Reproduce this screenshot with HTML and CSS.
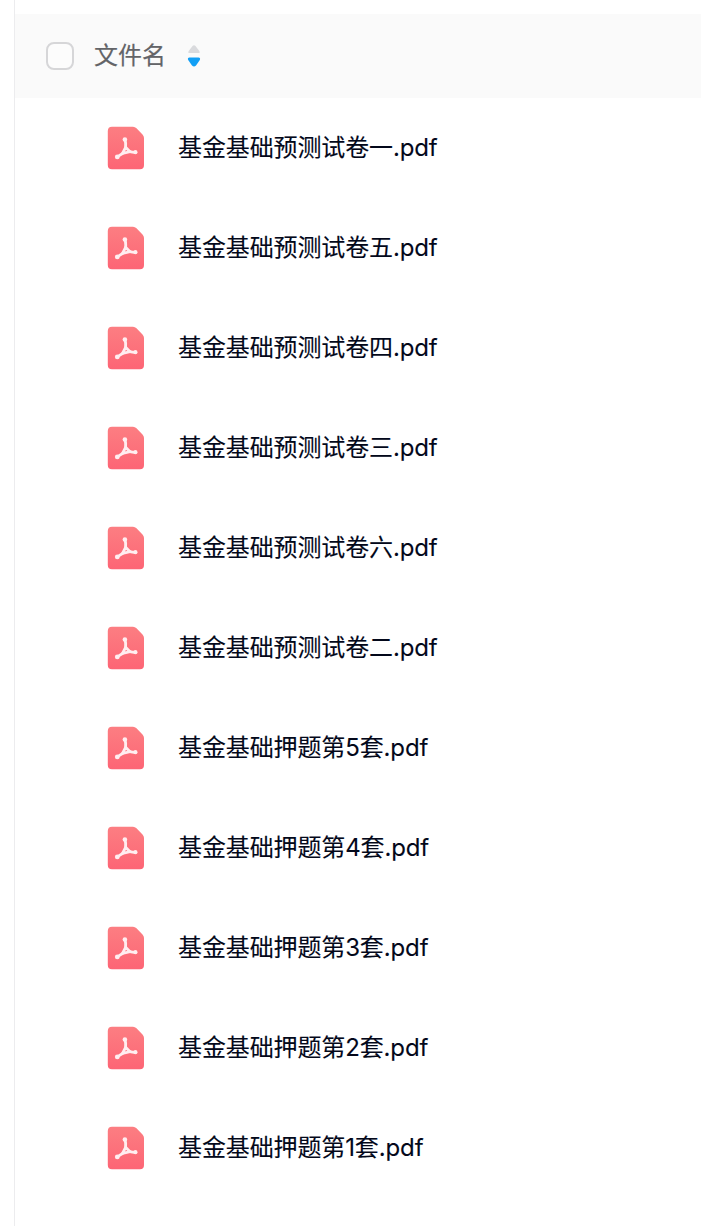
FILE: index.html
```html
<!DOCTYPE html>
<html lang="zh-CN">
<head>
<meta charset="utf-8">
<title>文件列表</title>
<link rel="stylesheet" href="styles.css">
</head>
<body>
<main class="panel">
  <header class="head">
    <span class="checkbox"></span>
    <span class="label">文件名</span>
    <svg class="sort" width="14" height="24" viewBox="0 0 14 24"><path d="M2.500 9Q.5 9 1.700 7L5.500 2Q7 .5 8.500 2L12.300 7Q13.500 9 11.500 9Z" fill="#d9dadd"/><path d="M2.500 13.500Q.2 13.500 1.200 16L5 21.500Q7 23.500 9 21.500L12.800 16Q13.800 13.500 11.500 13.500Z" fill="#129ff5"/></svg>
  </header>
  <ul class="files" id="files"></ul>
</main>
<template id="row">
  <li class="file">
    <svg class="icon" width="38" height="44" viewBox="0 0 38 44">
      <defs><linearGradient id="g" x1="0" y1="0" x2="0" y2="1"><stop offset="0" stop-color="#fc7e82"/><stop offset="1" stop-color="#fd6575"/></linearGradient></defs>
      <path d="M5 .7H26Q28 .7 29.500 2.200L35.500 8.500Q37 10 37 12V39Q37 43.300 33 43.300H5Q.8 43.300 .8 39V5Q.8 .7 5 .7Z" fill="url(#g)"/>
      <g fill="none" stroke="#ffeef0" stroke-width="2.800" stroke-linecap="round" stroke-linejoin="round">
        <path d="M18.600 21.300L15.500 27.500L23 25.700Z"/>
        <path d="M18 13.500Q19 17 18.600 21.300M15.500 27.500Q13 29 10.300 31M23 25.700Q25.500 26.400 28.500 26.300"/>
      </g>
      <g fill="#ffeef0"><circle cx="17.900" cy="13.500" r="2.300"/><circle cx="10.300" cy="30.900" r="2.400"/><circle cx="28.400" cy="26.200" r="2.100"/></g>
    </svg>
    <span class="name"></span>
  </li>
</template>
<script src="files.js"></script>
</body>
</html>
```
FILE: styles.css
```css
body { margin: 0; background: #fff; font-family: Inter, "Noto Sans CJK SC", sans-serif; font-size: 24px; }
.panel { box-sizing: border-box; height: 1226px; margin-left: 14px; padding-top: 14px; border-left: 1px solid #ececee; overflow: hidden; }
.head { display: flex; align-items: center; height: 84px; padding-left: 31px; background: #fafafa; color: #636468; }
.checkbox { box-sizing: border-box; width: 28px; height: 28px; border: 2px solid #d6d6d8; border-radius: 8px; background: #fcfcfc; }
.label { margin: 0 21px 0 20px; padding-bottom: 6px; -webkit-text-stroke: .15px; }
.files { margin: 0; padding: 0; list-style: none; }
.file { display: flex; align-items: center; height: 100px; padding-left: 92px; color: #03081a; }
.name { margin-left: 33px; padding-bottom: 6px; letter-spacing: -.12px; white-space: nowrap; -webkit-text-stroke: .1px; }
```
FILE: files.js
```js
const names = [
  ...["一", "五", "四", "三", "六", "二"].map(n => `基金基础预测试卷${n}.pdf`),
  ...[5, 4, 3, 2, 1].map(n => `基金基础押题第${n}套.pdf`)
];
const template = document.getElementById("row");
for (const name of names) {
  const row = template.content.cloneNode(true);
  row.querySelector(".name").textContent = name;
  document.getElementById("files").append(row);
}
```
